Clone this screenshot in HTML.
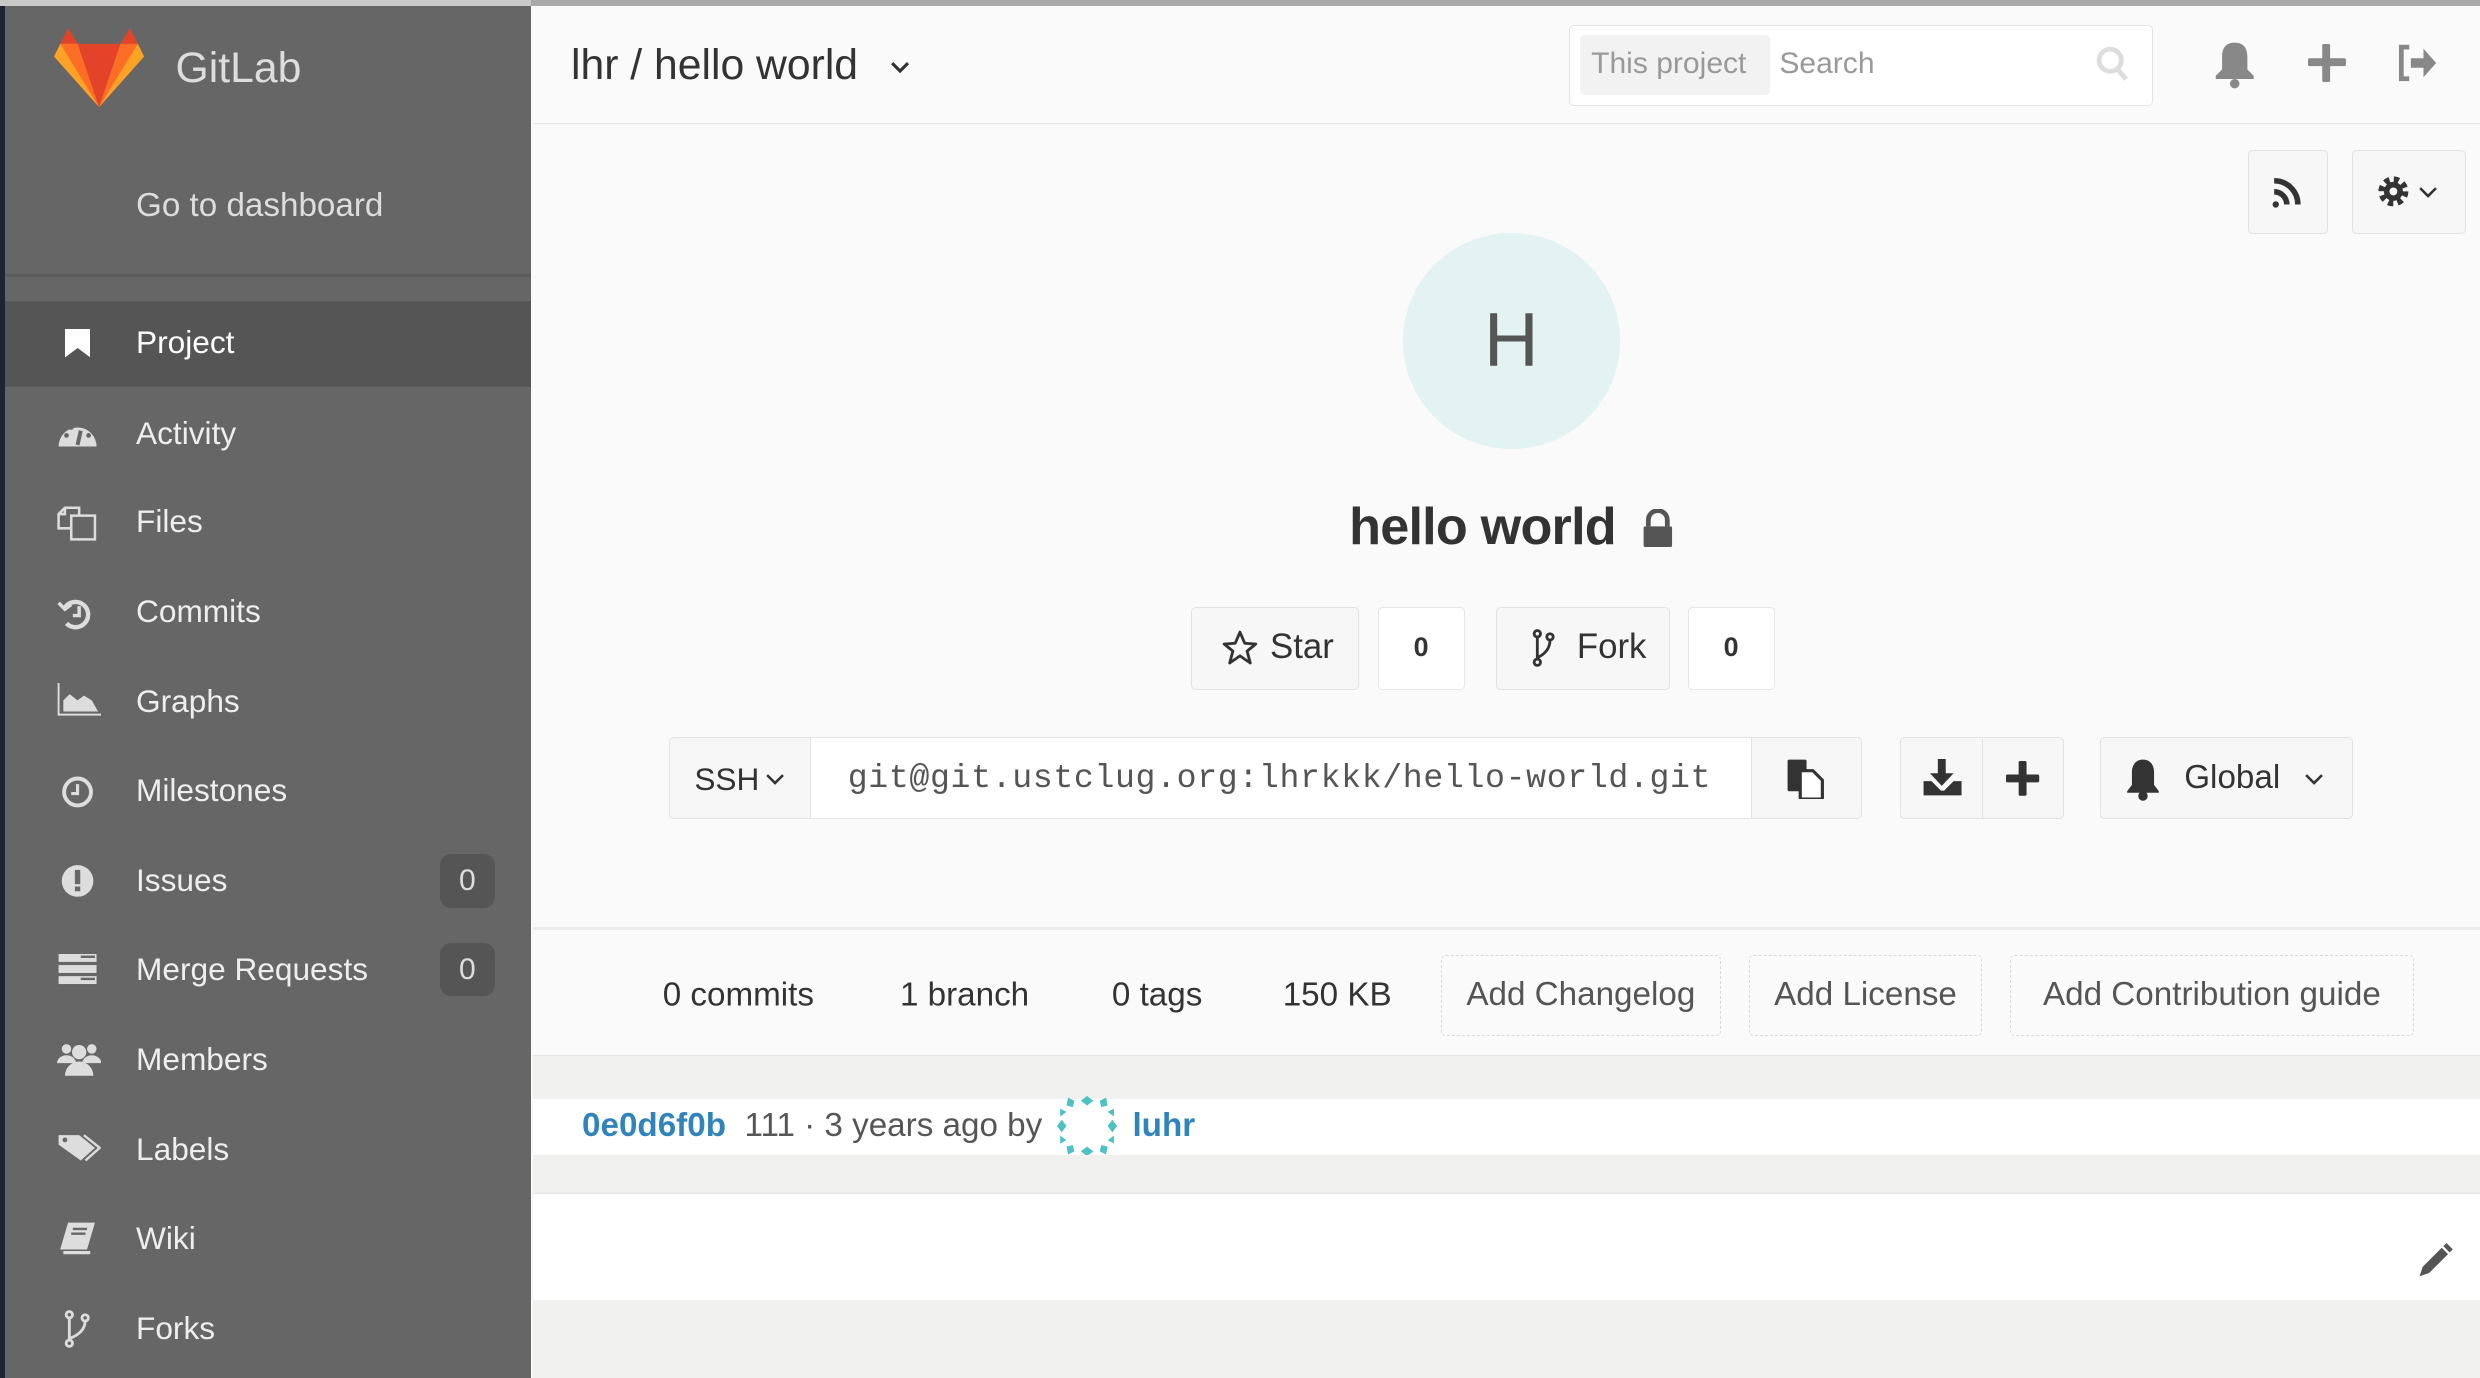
<!DOCTYPE html>
<html><head><meta charset="utf-8"><style>
html,body{margin:0;padding:0;}
body{width:2480px;height:1378px;overflow:hidden;background:#fafafa;}
#w{zoom:1.581633;position:relative;width:1568px;height:871px;overflow:hidden;font-family:"Liberation Sans",sans-serif;background:#fafafa;}
.a{position:absolute;}
#sb{left:0;top:0;width:336px;height:871px;background:#666;}
.it{position:absolute;left:86px;font-size:20px;color:#eee;line-height:1;}
.badge{position:absolute;left:278px;width:35px;height:34px;background:#555;border-radius:7px;color:#ddd;font-size:19px;text-align:center;line-height:34px;}
.btn{position:absolute;background:#f7f7f7;border:1px solid #e2e2e2;border-radius:3px;box-sizing:border-box;color:#333;font-size:20px;}
.cnt{position:absolute;background:#fff;border:1px solid #e6e6e6;border-radius:3px;box-sizing:border-box;font-size:17px;font-weight:bold;text-align:center;color:#333;}
.st{position:absolute;top:629px;font-size:21px;color:#333;line-height:1;transform:translateY(-50%);}
.db{position:absolute;top:604px;height:51px;border:1px dashed #d8d8d8;border-radius:3px;box-sizing:border-box;font-size:21px;color:#555;text-align:center;line-height:49px;}
.sic{position:absolute;left:36px;}
</style></head><body><div id="w">
<div class="a" style="left:0;top:0;width:1568px;height:4px;background:#a9a9a9"></div>
<div class="a" style="left:337px;top:4px;width:1231px;height:74px;background:#fafafa;border-bottom:1px solid #e5e5e5"></div>
<div id="sb" class="a">
 <div class="a" style="left:0;top:0;width:3px;height:871px;background:#1f2530"></div>
 <div class="a" style="left:0;top:0;width:336px;height:4px;background:#c9c9c9"></div>
 <svg class="a" style="left:34px;top:18px" width="57" height="50" viewBox="0 0 57 50">
  <polygon points="4,10 9,0 15,10" fill="#e24329"/><polygon points="42,10 48,0 53,10" fill="#e24329"/>
  <polygon points="4,10 15,10 28.5,50 0,18" fill="#fca326"/><polygon points="53,10 42,10 28.5,50 57,18" fill="#fca326"/>
  <polygon points="4,10 15,10 28.5,50 " fill="#fc6d26"/><polygon points="53,10 42,10 28.5,50" fill="#fc6d26"/>
  <polygon points="15,10 42,10 28.5,50" fill="#e24329"/>
 </svg>
 <div class="a" style="left:111px;top:28px;font-size:27px;color:#ddd">GitLab</div>
 <div class="a" style="left:86px;top:118px;font-size:21px;color:#ddd">Go to dashboard</div>
 <div class="a" style="left:3px;top:173px;width:333px;height:2px;background:#5c5c5c"></div>
 <div class="a" style="left:3px;top:190px;width:333px;height:55px;background:#555"></div>
 <svg class="a" style="left:41px;top:208px" width="16" height="18"><path d="M0 0H16V18L8 12L0 18Z" fill="#fff"/></svg>
 <div class="it" style="top:207px;color:#fff">Project</div>
 <div class="it" style="top:264px">Activity</div>
 <div class="it" style="top:320px">Files</div>
 <div class="it" style="top:377px">Commits</div>
 <div class="it" style="top:434px">Graphs</div>
 <div class="it" style="top:490px">Milestones</div>
 <div class="it" style="top:547px">Issues</div>
 <div class="it" style="top:603px">Merge Requests</div>
 <div class="it" style="top:660px">Members</div>
 <div class="it" style="top:717px">Labels</div>
 <div class="it" style="top:773px">Wiki</div>
 <div class="it" style="top:830px">Forks</div>
 <!-- activity -->
 <svg class="sic" style="top:264px" width="26" height="20"><path d="M1 18A12 12 0 0 1 25 18Z" fill="#ddd"/><path d="M13 17l2-9" stroke="#666" stroke-width="2.5"/><circle cx="6" cy="11" r="1.5" fill="#666"/><circle cx="9" cy="6" r="1.5" fill="#666"/><circle cx="20" cy="11" r="1.5" fill="#666"/></svg>
 <!-- files -->
 <svg class="sic" style="top:318px" width="26" height="26" fill="none" stroke="#ddd" stroke-width="1.6"><path d="M9 8h15v15H9z"/><path d="M14 8V3H5L1 7v9h8"/><path d="M5 3v4H1"/></svg>
 <!-- commits -->
 <svg class="sic" style="top:376px" width="26" height="24" fill="none" stroke="#ddd" stroke-width="2.8"><path d="M5 8A8 8 0 1 1 6 18"/><path d="M1 5l4 4 4-3" stroke-width="2.2"/><path d="M14 7v6h-4" stroke-width="2.2"/></svg>
 <!-- graphs -->
 <svg class="sic" style="top:432px" width="28" height="22"><path d="M1 0v20h27" fill="none" stroke="#ddd" stroke-width="1.2"/><path d="M4 18V11l4-4 5 4 4-3 5 3 4 7z" fill="#ddd"/></svg>
 <!-- milestones -->
 <svg class="sic" style="top:489px" width="26" height="24" fill="none" stroke="#ddd" stroke-width="2.5"><circle cx="13" cy="12" r="8.5"/><path d="M13 7v6h-4" stroke-width="2"/></svg>
 <!-- issues -->
 <svg class="sic" style="top:545px" width="26" height="24"><circle cx="13" cy="12" r="10" fill="#ddd"/><rect x="11.3" y="5" width="3.4" height="9" fill="#666"/><rect x="11.3" y="15.5" width="3.4" height="3" fill="#666"/></svg>
 <!-- MR -->
 <svg class="sic" style="top:603px" width="26" height="20" fill="#ddd"><rect x="1" y="0" width="24" height="5"/><rect x="1" y="7" width="24" height="5"/><rect x="1" y="14" width="24" height="5"/><rect x="15" y="1" width="9" height="1.5" fill="#666"/><rect x="15" y="15" width="9" height="1.5" fill="#666"/></svg>
 <!-- members -->
 <svg class="sic" style="top:658px" width="28" height="24" fill="#ddd"><circle cx="14" cy="7" r="4.5"/><circle cx="6" cy="5" r="3"/><circle cx="22" cy="5" r="3"/><path d="M0 14a6 5 0 0 1 12 0z"/><path d="M16 14a6 5 0 0 1 12 0z"/><path d="M5 22a9 9 0 0 1 18 0z"/></svg>
 <!-- labels -->
 <svg class="sic" style="top:716px" width="28" height="22"><path d="M1 2h13l10 8-9 8L1 8z" fill="#ddd"/><path d="M17 2l10 8-9 8" fill="none" stroke="#ddd" stroke-width="1.5"/><circle cx="5" cy="5" r="1.5" fill="#666"/></svg>
 <!-- wiki -->
 <svg class="sic" style="top:772px" width="28" height="22"><path d="M7 1h17l-5 17H2z" fill="#ddd"/><path d="M4 20h17" stroke="#ddd" stroke-width="2"/><path d="M10 5h9M9 8h9" stroke="#666" stroke-width="1.5"/></svg>
 <!-- forks -->
 <svg class="sic" style="top:828px;left:40px" width="20" height="24" fill="none" stroke="#ddd" stroke-width="1.8"><circle cx="4" cy="3" r="2"/><circle cx="4" cy="21" r="2"/><circle cx="14" cy="5" r="2"/><path d="M4 5v14M4 18c6-2 10-6 10-11"/></svg>
 <div class="badge" style="top:540px">0</div>
 <div class="badge" style="top:596px">0</div>
</div>
<div class="a" style="left:361px;top:26px;font-size:27px;color:#333">lhr / hello world</div>
<svg class="a" style="left:562px;top:38px" width="14" height="10" fill="none" stroke="#333" stroke-width="2"><path d="M2 2l5 5 5-5"/></svg>
<div class="a" style="left:992px;top:16px;width:369px;height:51px;background:#fff;border:1px solid #e3e3e3;border-radius:3px;box-sizing:border-box"></div>
<div class="a" style="left:999px;top:22px;width:120px;height:38px;background:#f2f2f2;border-radius:3px"></div>
<div class="a" style="left:1006px;top:30px;font-size:19px;color:#999">This project</div>
<div class="a" style="left:1125px;top:30px;font-size:19px;color:#999">Search</div>
<svg class="a" style="left:1325px;top:29px" width="22" height="24"><circle cx="9" cy="9" r="7" fill="none" stroke="#ddd" stroke-width="3"/><path d="M14 15l5 6" stroke="#ddd" stroke-width="3"/></svg>
<svg class="a" style="left:1398px;top:26px" width="30" height="30" fill="#888"><path d="M15 1c-6 0-8 4-8 9v8l-4 4v2h24v-2l-4-4v-8c0-5-2-9-8-9z"/><circle cx="15" cy="27" r="3"/></svg>
<svg class="a" style="left:1459px;top:28px" width="24" height="24" fill="#888"><rect x="9" y="0" width="5" height="24" rx="1"/><rect x="0" y="9" width="24" height="5" rx="1"/></svg>
<svg class="a" style="left:1514px;top:28px" width="28" height="26" fill="#888"><path d="M9 2H4v20h5" fill="none" stroke="#888" stroke-width="3"/><path d="M10 9h8V3l8 9-8 9v-6h-8z"/></svg>
<div class="btn" style="left:1421px;top:95px;width:51px;height:53px"></div>
<svg class="a" style="left:1436px;top:111px" width="20" height="22" fill="none" stroke="#333" stroke-width="3.5"><circle cx="3" cy="18" r="2" fill="#333" stroke="none"/><path d="M2 10a8 8 0 0 1 8 8M2 3a15 15 0 0 1 15 15"/></svg>
<div class="btn" style="left:1487px;top:95px;width:72px;height:53px"></div>
<svg class="a" style="left:1502px;top:110px" width="24" height="24"><circle cx="11" cy="11" r="7" fill="none" stroke="#333" stroke-width="5" stroke-dasharray="3 2.5"/><circle cx="11" cy="11" r="6" fill="#333"/><circle cx="11" cy="11" r="2.5" fill="#f7f7f7"/></svg>
<svg class="a" style="left:1528px;top:117px" width="14" height="10" fill="none" stroke="#333" stroke-width="1.6"><path d="M2 2l5 5 5-5"/></svg>
<div class="a" style="left:887px;top:147px;width:137px;height:137px;border-radius:50%;background:#e3f3f2;text-align:center;line-height:137px;font-size:48px;color:#555">H</div>
<div class="a" style="left:853px;top:314px;font-size:33px;font-weight:bold;color:#333;letter-spacing:-0.5px">hello world</div>
<svg class="a" style="left:1038px;top:322px" width="20" height="25" fill="#555"><path d="M4 11V7a6 6 0 0 1 12 0v4" fill="none" stroke="#555" stroke-width="3"/><rect x="1" y="11" width="18" height="13" rx="1"/></svg>
<div class="btn" style="left:753px;top:384px;width:106px;height:52px"></div>
<svg class="a" style="left:772px;top:398px" width="24" height="24" fill="none" stroke="#333" stroke-width="1.8" stroke-linejoin="round"><path d="M12 2l3 7 7 .5-5.5 4.5 2 7.5L12 17l-6.5 4.5 2-7.5L2 9.5 9 9z"/></svg>
<div class="a" style="left:803px;top:397px;font-size:22px;color:#333">Star</div>
<div class="cnt" style="left:871px;top:384px;width:55px;height:52px;line-height:50px">0</div>
<div class="btn" style="left:946px;top:384px;width:110px;height:52px"></div>
<svg class="a" style="left:968px;top:398px" width="16" height="24" fill="none" stroke="#333" stroke-width="1.8"><circle cx="4" cy="3" r="2"/><circle cx="4" cy="21" r="2"/><circle cx="12" cy="5" r="2"/><path d="M4 5v14M4 18c5-2 8-6 8-11"/></svg>
<div class="a" style="left:997px;top:397px;font-size:22px;color:#333">Fork</div>
<div class="cnt" style="left:1067px;top:384px;width:55px;height:52px;line-height:50px">0</div>
<div class="btn" style="left:423px;top:466px;width:100px;height:52px;border-radius:3px 0 0 3px"></div>
<div class="a" style="left:439px;top:481px;font-size:20px;color:#333">SSH</div>
<svg class="a" style="left:483px;top:488px" width="14" height="10" fill="none" stroke="#333" stroke-width="1.6"><path d="M2 2l5 5 5-5"/></svg>
<div class="a" style="left:512px;top:466px;width:596px;height:52px;background:#fff;border:1px solid #e3e3e3;box-sizing:border-box"></div>
<div class="a" style="left:536px;top:480px;font-family:'Liberation Mono',monospace;font-size:21px;color:#555;letter-spacing:0.4px">git@git.ustclug.org:lhrkkk/hello-world.git</div>
<div class="btn" style="left:1107px;top:466px;width:70px;height:52px;border-radius:0 3px 3px 0"></div>
<svg class="a" style="left:1129px;top:479px" width="24" height="26" fill="#333"><rect x="1" y="1" width="12" height="20" rx="1"/><path d="M9 8h8l6 6v12H9z" fill="#fff" stroke="#333" stroke-width="2"/></svg>
<div class="btn" style="left:1201px;top:466px;width:104px;height:52px"></div>
<div class="a" style="left:1253px;top:467px;width:1px;height:50px;background:#e2e2e2"></div>
<svg class="a" style="left:1215px;top:480px" width="26" height="24" fill="#333"><path d="M10 0h5v9h5l-7.5 8L5 9h5z"/><path d="M1 14h5l6 6h2l6-6h5v9H1z"/></svg>
<svg class="a" style="left:1268px;top:481px" width="22" height="22" fill="#333"><rect x="8" y="0" width="5" height="22" rx="1"/><rect x="0" y="8.5" width="21" height="5" rx="1"/></svg>
<div class="btn" style="left:1328px;top:466px;width:160px;height:52px"></div>
<svg class="a" style="left:1343px;top:479px" width="24" height="28" fill="#333"><path d="M12 1c-5 0-7 4-7 8v8l-3 4v1h20v-1l-3-4v-8c0-4-2-8-7-8z"/><circle cx="12" cy="24" r="3"/></svg>
<div class="a" style="left:1381px;top:480px;font-size:21px;color:#333">Global</div>
<svg class="a" style="left:1456px;top:488px" width="14" height="10" fill="none" stroke="#333" stroke-width="1.6"><path d="M2 2l5 5 5-5"/></svg>
<div class="a" style="left:337px;top:586px;width:1231px;height:2px;background:#ebebeb"></div>
<div class="st" style="left:419px">0 commits</div>
<div class="st" style="left:569px">1 branch</div>
<div class="st" style="left:703px">0 tags</div>
<div class="st" style="left:811px">150 KB</div>
<div class="db" style="left:911px;width:177px">Add Changelog</div>
<div class="db" style="left:1106px;width:147px">Add License</div>
<div class="db" style="left:1271px;width:255px">Add Contribution guide</div>
<div class="a" style="left:337px;top:667px;width:1231px;height:28px;background:#f0f0ef;border-top:1px solid #e5e5e5"></div>
<div class="a" style="left:337px;top:695px;width:1231px;height:35px;background:#fff"></div>
<div class="a" style="left:368px;top:700px;font-size:21px;color:#333"><span style="color:#3084bb;font-weight:bold">0e0d6f0b</span>&nbsp; <span style="color:#555">111 · 3 years ago by</span></div>
<svg class="a" style="left:668px;top:693px" width="38" height="38" fill="#4cc2c4"><g transform="translate(19 19)"><path d="M-4-16l4-3 4 3-4 3zM-4 16l4-3 4 3-4 3zM-16-4l-3 4 3 4 3-4zM16-4l3 4-3 4-3-4z"/><path d="M8-16l4-2 1 5-4 1zM-8-16l-4-2-1 5 4 1zM8 16l4 2 1-5-4-1zM-8 16l-4 2-1-5 4-1z"/><path d="M-13-9l-4-2 0 5zM13-9l4-2 0 5zM-13 9l-4 2 0-5zM13 9l4 2 0-5z"/></g></svg>
<div class="a" style="left:716px;top:700px;font-size:21px;color:#3084bb;font-weight:bold">luhr</div>
<div class="a" style="left:337px;top:730px;width:1231px;height:24px;background:#f0f0ef;border-bottom:1px solid #e5e5e5"></div>
<div class="a" style="left:337px;top:755px;width:1231px;height:67px;background:#fff"></div>
<svg class="a" style="left:1529px;top:786px" width="22" height="22" fill="#555"><path d="M1 21l2-6L15 3l4 4L7 19z"/><path d="M16 2l2-2 4 4-2 2z"/></svg>
<div class="a" style="left:337px;top:822px;width:1231px;height:49px;background:#f0f0ef"></div>
</div></body></html>
